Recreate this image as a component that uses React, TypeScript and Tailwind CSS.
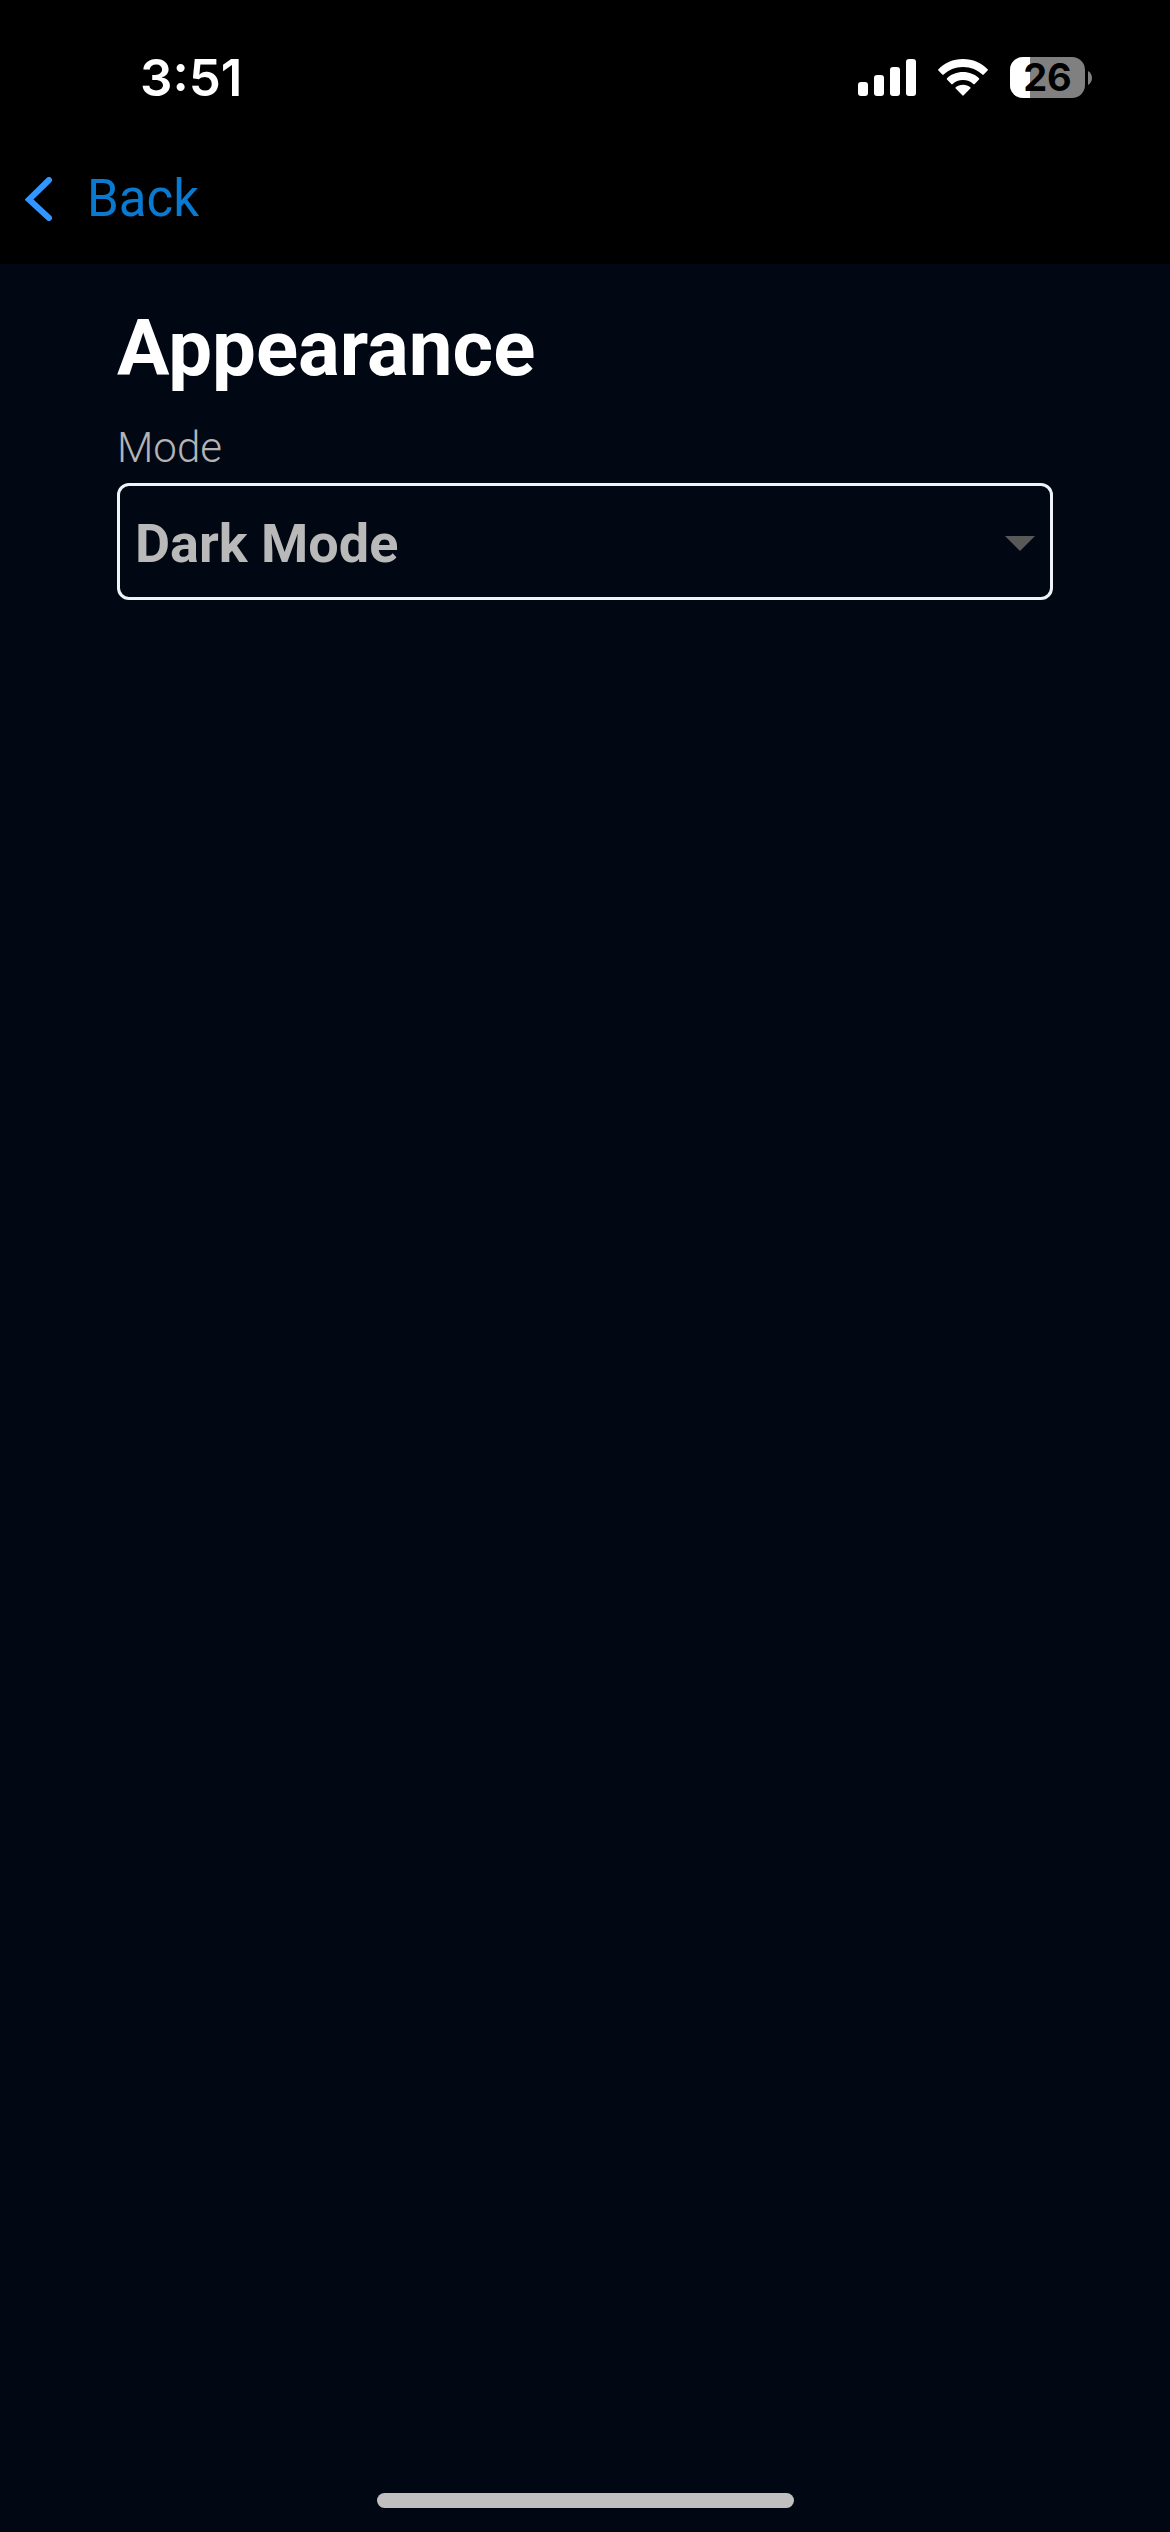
import { useState } from "react";

const modes = ["Light Mode", "Dark Mode", "System Default"] as const;

function SignalIcon() {
  return (
    <svg width="58" height="38" viewBox="0 0 58 38" fill="currentColor" aria-hidden>
      <rect x="0" y="23" width="10" height="14" rx="3" />
      <rect x="16" y="16" width="10" height="21" rx="3" />
      <rect x="32" y="8" width="10" height="29" rx="3" />
      <rect x="48" y="0" width="10" height="37" rx="3" />
    </svg>
  );
}

function WifiIcon() {
  return (
    <svg width="50" height="38" viewBox="0 0 50 38" fill="currentColor" aria-hidden>
      <path d="M25 8C33 8 39.6 10.9 44.3 15.6Q45 16.2 45.7 15.6L49.6 11.6Q50.2 10.9 49.6 10.2C43.5 4 35 0 25 0S6.500 4 .4 10.200Q-.2 10.900.4 11.600L4.300 15.600Q5 16.200 5.700 15.600C10.400 10.900 17 8 25 8Z" />
      <path d="M25 21C29.200 21 32.700 22.500 35.300 24.900Q36 25.500 36.700 24.900L41 20.600Q41.600 19.900 41 19.200C36.800 15.300 31.300 13 25 13S13.200 15.300 9 19.200Q8.400 19.900 9 20.600L13.300 24.900Q14 25.500 14.700 24.900C17.300 22.500 20.800 21 25 21Z" />
      <path d="M32.300 28.200Q33 28.900 32.300 29.600L25.700 36.300Q25 37 24.300 36.300L17.700 29.600Q17 28.900 17.700 28.200C19.600 26.700 22.100 25.700 25 25.700S30.400 26.700 32.300 28.200Z" />
    </svg>
  );
}

function Battery({ level }: { level: number }) {
  return (
    <div className="flex items-center gap-[3px]">
      <div className="relative h-[41px] w-[75px]">
        <div className="h-full overflow-hidden rounded-[13px] bg-[#808080]">
          <div className="h-full bg-white" style={{ width: `${level}%` }} />
        </div>
        <span className="absolute inset-0 text-center font-[Inter,sans-serif] text-[38px] leading-[41px] font-bold text-black">
          {level}
        </span>
      </div>
      <svg width="4" height="14" viewBox="0 0 4 14" fill="#808080" aria-hidden>
        <path d="M0 0C2.500 1.500 4 4 4 7S2.500 12.500 0 14Z" />
      </svg>
    </div>
  );
}

function StatusBar() {
  return (
    <div className="flex h-[156px] items-start justify-between pt-[57px] pr-[78px] pl-[140px]">
      <span className="font-[Inter,sans-serif] text-[51px] leading-[42px] font-semibold">3:51</span>
      <div className="flex items-center gap-[22px]">
        <div className="flex items-center gap-[22px]">
          <SignalIcon />
          <WifiIcon />
        </div>
        <Battery level={26} />
      </div>
    </div>
  );
}

export default function App() {
  const [mode, setMode] = useState<string>("Dark Mode");

  return (
    <div className="flex min-h-screen flex-col bg-[#020813] font-[Roboto,sans-serif] text-white">
      <header className="bg-black">
        <StatusBar />
        <nav className="flex h-[108px] items-start px-[25px] pt-[13px]">
          <a href="#back" className="flex items-center gap-[34px] text-[51px] leading-[60px] text-[#0a7ad1]">
            <svg width="28" height="44" viewBox="0 0 28 44" fill="none" aria-hidden>
              <path
                d="M24 3L4 22.500L24 41"
                stroke="#3395ff"
                strokeWidth="6"
                strokeLinecap="round"
                strokeLinejoin="miter"
              />
            </svg>
            Back
          </a>
        </nav>
      </header>

      <main className="flex-1 px-[10%] pt-10">
        <h1 className="text-[78px] leading-[90px] font-bold">Appearance</h1>
        <label htmlFor="mode" className="mt-[30px] block text-[42px] leading-[48px] font-light text-[#b3b4b8]">
          Mode
        </label>
        <div className="relative mt-[11px]">
          <select
            id="mode"
            value={mode}
            onChange={(e) => setMode(e.target.value)}
            className="block h-[117px] w-full appearance-none rounded-xl border-3 border-[#f0f4f8] bg-transparent pt-1 pr-16 pl-[15px] text-[54px] leading-[64px] font-bold text-[#b9b9b9]"
          >
            {modes.map((m) => (
              <option key={m} value={m}>
                {m}
              </option>
            ))}
          </select>
          <div className="pointer-events-none absolute inset-y-0 right-[18px] flex items-center pt-1">
            <svg width="30" height="15" viewBox="0 0 30 15" fill="#585858" aria-hidden>
              <path d="M0 0H30L15 15Z" />
            </svg>
          </div>
        </div>
      </main>

      <footer className="flex justify-center pb-6">
        <div className="h-[15px] w-[417px] rounded-full bg-[#c0c0c0]" />
      </footer>
    </div>
  );
}
